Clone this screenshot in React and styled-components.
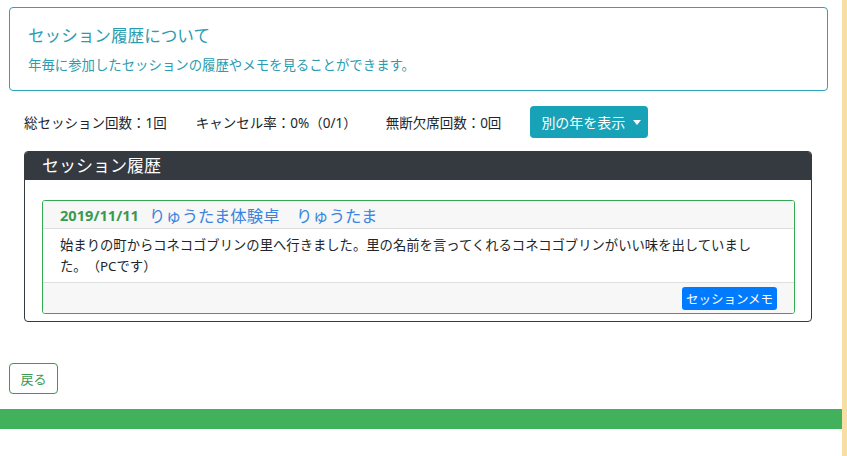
import styled, { createGlobalStyle } from "styled-components"

const GlobalStyle = createGlobalStyle`
body{
  margin: 0;
  font-family: "Noto Sans", "Noto Sans CJK JP", sans-serif;
  color: #212529;
  background: #fff;
  text-spacing-trim: space-all;
}
*{ box-sizing: border-box; }
`

export default function App(){

  return(
<Page>
  <GlobalStyle/>
  <Main>
    <InfoBox>
      <InfoTitle>セッション履歴について</InfoTitle>
      <InfoText>年毎に参加したセッションの履歴やメモを見ることができます。</InfoText>
    </InfoBox>

    <Stats>
      <Stat>総セッション回数：1回</Stat>
      <Stat>キャンセル率：0%（0/1）</Stat>
      <Stat>無断欠席回数：0回</Stat>
      <YearButton>
        別の年を表示
        <Caret/>
      </YearButton>
    </Stats>

    <HistoryCard>
      <HistoryHeader>セッション履歴</HistoryHeader>
      <HistoryBody>
        <SessionCard>
          <SessionHead>
            <SessionDate>2019/11/11</SessionDate>
            <SessionTitle>りゅうたま体験卓　りゅうたま</SessionTitle>
          </SessionHead>
          <SessionText>
            <p>始まりの町からコネコゴブリンの里へ行きました。里の名前を言ってくれるコネコゴブリンがいい味を出していました。（PCです）</p>
          </SessionText>
          <SessionFoot>
            <MemoButton>セッションメモ</MemoButton>
          </SessionFoot>
        </SessionCard>
      </HistoryBody>
    </HistoryCard>

    <BackButton>戻る</BackButton>

    <Footer/>
  </Main>
  <Side/>
</Page>
  )
}

const Page = styled.div`
display: flex;
width: 847px;
height: 456px;
overflow: hidden;
`

const Main = styled.div`
width: 842px;
padding-top: 7px;
display: flex;
flex-direction: column;
`

const Side = styled.div`
width: 5px;
background-color: #f5dfa2;
`

const InfoBox = styled.div`
margin: 0 14px 0 9px;
height: 84px;
border: 1px solid #2ea3b6;
border-radius: 4px;
padding: 17px 18px 0 18px;
color: #2a9db1;
`

const InfoTitle = styled.h2`
margin: 0;
font-size: 16.6px;
font-weight: 400;
line-height: 22px;
`

const InfoText = styled.p`
margin: 9px 0 0 0;
font-size: 13.4px;
line-height: 18px;
`

const Stats = styled.div`
margin: 15px 0 0 24px;
display: flex;
align-items: center;
gap: 29px;
height: 32px;
`

const Stat = styled.span`
font-size: 13.5px;
color: #212529;
white-space: nowrap;
`

const YearButton = styled.button`
display: flex;
align-items: center;
gap: 8px;
height: 32px;
width: 118px;
padding: 0 0 0 11px;
border: none;
border-radius: 4px;
background-color: #17a2b8;
color: #fff;
font-family: inherit;
font-size: 14px;
`

const Caret = styled.span`
width: 0;
height: 0;
border-left: 4px solid transparent;
border-right: 4px solid transparent;
border-top: 5px solid #fff;
`

const HistoryCard = styled.div`
margin: 13px 0 0 24px;
width: 788px;
border: 1px solid #343a40;
border-radius: 4px;
overflow: hidden;
`

const HistoryHeader = styled.div`
height: 28px;
background-color: #343a40;
color: #fff;
font-size: 17px;
line-height: 28px;
padding-left: 17px;
`

const HistoryBody = styled.div`
padding: 20px 16px 7px 17px;
`

const SessionCard = styled.div`
border: 1px solid #34a853;
border-radius: 3px;
overflow: hidden;
`

const SessionHead = styled.div`
height: 28px;
display: flex;
align-items: center;
gap: 10px;
padding-left: 17px;
background-color: #f7f7f7;
border-bottom: 1px solid #dedede;
`

const SessionDate = styled.span`
color: #3a9a4f;
font-weight: 700;
font-size: 14.6px;
`

const SessionTitle = styled.span`
color: #3b84e0;
font-size: 16.4px;
`

const SessionText = styled.div`
height: 53px;
padding: 6px 17px 0 17px;
p{
  margin: 0;
  max-width: 700px;
  font-size: 13.33px;
  line-height: 21px;
}
`

const SessionFoot = styled.div`
height: 31px;
display: flex;
justify-content: flex-end;
align-items: center;
padding-right: 17px;
background-color: #f7f7f7;
border-top: 1px solid #dedede;
`

const MemoButton = styled.button`
height: 23px;
width: 95px;
padding: 0;
border: none;
border-radius: 3px;
background-color: #007bff;
color: #fff;
font-family: inherit;
font-size: 12.5px;
`

const BackButton = styled.button`
margin: 41px 0 0 9px;
width: 49px;
height: 31px;
padding: 0;
border: 1px solid #3a9a4f;
border-radius: 4px;
background: #fff;
color: #3a9a4f;
font-family: inherit;
font-size: 13px;
`

const Footer = styled.div`
margin-top: 15px;
height: 20px;
background-color: #41b15c;
`
